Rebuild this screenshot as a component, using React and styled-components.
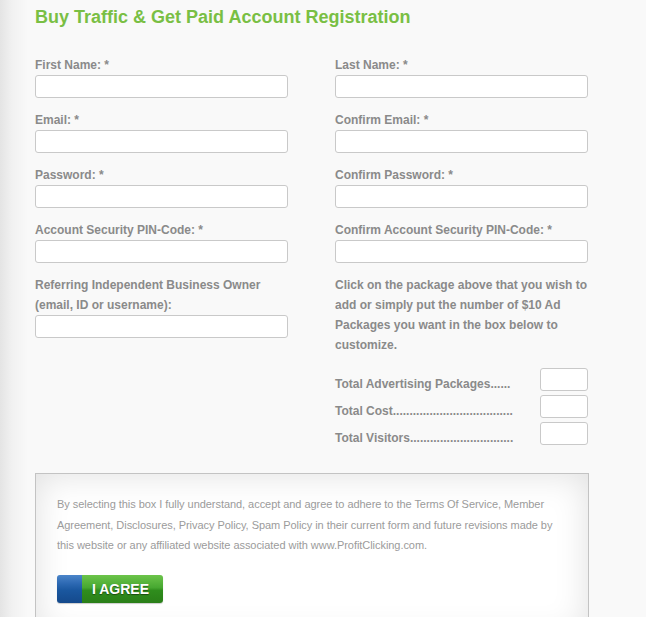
import React from 'react'
import styled, { createGlobalStyle } from 'styled-components'

const GlobalStyle = createGlobalStyle`
  html, body {
    margin: 0;
    padding: 0;
  }
  body {
    font-family: 'Liberation Sans', Arial, sans-serif;
    background: linear-gradient(to right, #e4e4e4 0, #f1f1f1 12px, #f9f9f9 28px, #f9f9f9 100%);
    min-height: 617px;
  }
`

const Page = styled.div`
  width: 554px;
  padding: 0 0 0 35px;
`

const Title = styled.h1`
  margin: 0;
  padding-top: 6px;
  font-size: 18px;
  line-height: 22px;
  font-weight: bold;
  color: #79bf44;
`

const Columns = styled.div`
  display: grid;
  grid-template-columns: 253px 253px;
  column-gap: 47px;
  margin-top: 27px;
`

const Column = styled.div`
  display: flex;
  flex-direction: column;
`

const Field = styled.div`
  display: flex;
  flex-direction: column;
  margin-bottom: 12px;
`

const Label = styled.label`
  font-size: 12px;
  line-height: 20px;
  font-weight: bold;
  color: #8a8a8a;
`

const Input = styled.input`
  box-sizing: border-box;
  width: ${p => p.$w || '253px'};
  height: 23px;
  margin: 0;
  border: 1px solid #c9c9c9;
  border-radius: 3px;
  background: #fff;
  outline: none;
`

const Note = styled.p`
  margin: 0;
  font-size: 12px;
  line-height: 20px;
  font-weight: bold;
  color: #8a8a8a;
`

const Totals = styled.div`
  display: flex;
  flex-direction: column;
  gap: 4px;
  margin-top: 13px;
`

const TotalRow = styled.div`
  display: flex;
  justify-content: space-between;
  align-items: flex-end;
`

const TotalLabel = styled.span`
  font-size: 12px;
  line-height: 14px;
  font-weight: bold;
  color: #8a8a8a;
`

const Terms = styled.div`
  margin-top: 28px;
  border: 1px solid #c3c3c3;
  border-bottom: none;
  background: #fff;
  box-shadow: inset 0 0 34px rgba(0, 0, 0, 0.13);
  padding: 20px 21px 20px 21px;
  height: 123px;
`

const TermsText = styled.p`
  margin: 0;
  font-size: 11px;
  line-height: 20.5px;
  color: #9b9b9b;
  letter-spacing: -0.05px;
`

const AgreeButton = styled.button`
  display: flex;
  margin-top: 19px;
  width: 106px;
  height: 28px;
  padding: 0;
  border: none;
  border-radius: 3px;
  overflow: hidden;
  cursor: pointer;
  box-shadow: 0 1px 1px rgba(0, 0, 0, 0.2);
`

const BlueCap = styled.span`
  width: 25px;
  background: linear-gradient(to bottom, #4b85c9 0, #2d69b3 30%, #1a579f 55%, #14498c 100%);
`

const GreenFace = styled.span`
  flex: 1;
  display: flex;
  align-items: center;
  justify-content: center;
  background: linear-gradient(to bottom, #6cc44a 0, #47a831 45%, #2f8d1d 55%, #2a7f18 100%);
  color: #fff;
  font-family: 'Liberation Sans', Arial, sans-serif;
  font-size: 14px;
  font-weight: bold;
  text-shadow: 0 1px 1px rgba(0, 0, 0, 0.45);
  padding-right: 4px;
`

const App = () => {
  return (
    <>
      <GlobalStyle />
      <Page>
        <Title>Buy Traffic &amp; Get Paid Account Registration</Title>
        <Columns>
          <Column>
            <Field>
              <Label>First Name: *</Label>
              <Input />
            </Field>
            <Field>
              <Label>Email: *</Label>
              <Input />
            </Field>
            <Field>
              <Label>Password: *</Label>
              <Input type='password' />
            </Field>
            <Field>
              <Label>Account Security PIN-Code: *</Label>
              <Input />
            </Field>
            <Field>
              <Label>
                Referring Independent Business Owner
                <br />
                (email, ID or username):
              </Label>
              <Input />
            </Field>
          </Column>
          <Column>
            <Field>
              <Label>Last Name: *</Label>
              <Input />
            </Field>
            <Field>
              <Label>Confirm Email: *</Label>
              <Input />
            </Field>
            <Field>
              <Label>Confirm Password: *</Label>
              <Input type='password' />
            </Field>
            <Field>
              <Label>Confirm Account Security PIN-Code: *</Label>
              <Input />
            </Field>
            <Note>
              Click on the package above that you wish to add or simply put the
              number of $10 Ad Packages you want in the box below to customize.
            </Note>
            <Totals>
              <TotalRow>
                <TotalLabel>Total Advertising Packages......</TotalLabel>
                <Input $w='48px' />
              </TotalRow>
              <TotalRow>
                <TotalLabel>Total Cost....................................</TotalLabel>
                <Input $w='48px' />
              </TotalRow>
              <TotalRow>
                <TotalLabel>Total Visitors...............................</TotalLabel>
                <Input $w='48px' />
              </TotalRow>
            </Totals>
          </Column>
        </Columns>
        <Terms>
          <TermsText>
            By selecting this box I fully understand, accept and agree to adhere
            to the Terms Of Service, Member Agreement, Disclosures, Privacy
            Policy, Spam Policy in their current form and future revisions made
            by this website or any affiliated website associated with
            www.ProfitClicking.com.
          </TermsText>
          <AgreeButton>
            <BlueCap />
            <GreenFace>I AGREE</GreenFace>
          </AgreeButton>
        </Terms>
      </Page>
    </>
  )
}

export default App
